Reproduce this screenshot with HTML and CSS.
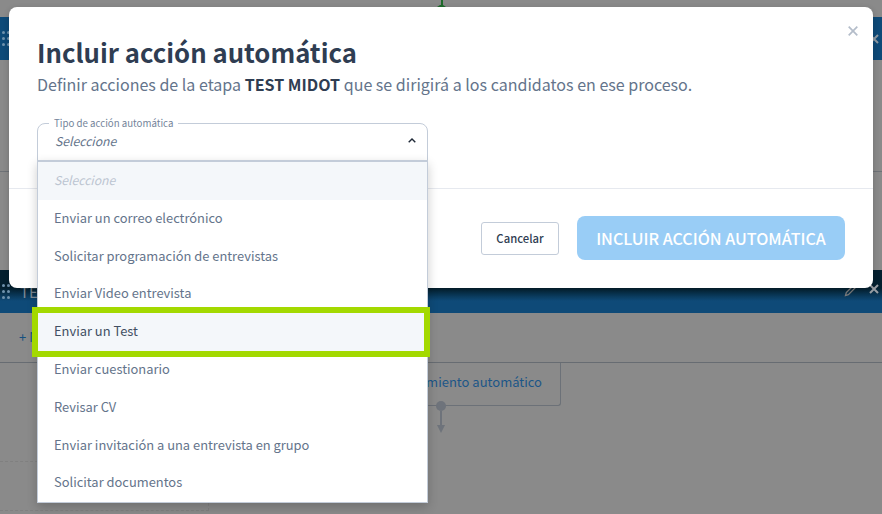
FILE: index.html
```html
<!DOCTYPE html>
<html lang="es">
<head>
<meta charset="utf-8">
<title>Incluir acción automática</title>
<link rel="stylesheet" href="styles.css">
</head>
<body>
<div class="page">
  <div class="stub"></div>
  <div class="bar bar-top">
    <svg class="grip" width="8" height="15" viewBox="0 0 8 15"><g fill="#6f93ad"><circle cx="1.5" cy="1.5" r="1.5"/><circle cx="6.5" cy="1.5" r="1.5"/><circle cx="1.5" cy="7.5" r="1.5"/><circle cx="6.5" cy="7.5" r="1.5"/><circle cx="1.5" cy="13.5" r="1.5"/><circle cx="6.5" cy="13.5" r="1.5"/></g></svg>
    <svg class="bar-x" width="10" height="10" viewBox="0 0 10 10"><path d="M1 1l8 8M9 1l-8 8" stroke="#8f9aa3" stroke-width="2"/></svg>
  </div>
  <div class="rule rule-top"></div>
  <div class="bar bar-second">
    <svg class="grip" width="8" height="15" viewBox="0 0 8 15"><g fill="#6f93ad"><circle cx="1.5" cy="1.5" r="1.5"/><circle cx="6.5" cy="1.5" r="1.5"/><circle cx="1.5" cy="7.5" r="1.5"/><circle cx="6.5" cy="7.5" r="1.5"/><circle cx="1.5" cy="13.5" r="1.5"/><circle cx="6.5" cy="13.5" r="1.5"/></g></svg>
    <span class="bar-title">TEST</span>
    <svg class="pencil" width="14" height="14" viewBox="0 0 14 14"><path d="M1.5 12.5l.8-3L10 2l2 2-7.6 7.7z" fill="none" stroke="#7b7b7b" stroke-width="1.3"/></svg>
    <svg class="bar-x" width="10" height="10" viewBox="0 0 10 10"><path d="M1 1l8 8M9 1l-8 8" stroke="#9a9fa5" stroke-width="2"/></svg>
  </div>
  <div class="tools"><span class="add">+ N</span></div>
  <div class="canvas">
    <div class="flow-box">Incluir movimiento automático</div>
    <div class="connector">
      <span class="dot"></span>
      <span class="stem"></span>
      <span class="arrow"></span>
    </div>
    <div class="dashed"></div>
  </div>
</div>

<div class="modal">
  <button class="close" type="button" aria-label="Cerrar">
    <svg width="10" height="10" viewBox="0 0 10 10"><path d="M.7.7l8.6 8.6M9.3.7L.7 9.3" stroke="#b4bdca" stroke-width="1.7"/></svg>
  </button>
  <div class="modal-body">
    <h1 class="title">Incluir acción automática</h1>
    <p class="subtitle">Definir acciones de la etapa <strong>TEST MIDOT</strong> que se dirigirá a los candidatos en ese proceso.</p>
    <div class="select">
      <span class="select-label">Tipo de acción automática</span>
      <span class="select-value">Seleccione</span>
      <svg class="chevron" width="8" height="5" viewBox="0 0 8 5"><path d="M.7 4.3L4 1l3.3 3.3" fill="none" stroke="#1f2937" stroke-width="1.4"/></svg>
      <ul class="menu">
        <li class="option placeholder">Seleccione</li>
        <li class="option">Enviar un correo electrónico</li>
        <li class="option">Solicitar programación de entrevistas</li>
        <li class="option">Enviar Video entrevista</li>
        <li class="option active">Enviar un Test</li>
        <li class="option">Enviar cuestionario</li>
        <li class="option">Revisar CV</li>
        <li class="option">Enviar invitación a una entrevista en grupo</li>
        <li class="option">Solicitar documentos</li>
      </ul>
    </div>
  </div>
  <div class="modal-footer">
    <button class="btn-cancel" type="button">Cancelar</button>
    <button class="btn-primary" type="button">INCLUIR ACCIÓN AUTOMÁTICA</button>
  </div>
</div>
</body>
</html>
```
FILE: styles.css
```css
* { box-sizing: border-box; }
html, body { margin: 0; height: 100%; }
body {
  width: 882px;
  height: 514px;
  overflow: hidden;
  position: relative;
  background: #8a8a8a;
  font-family: "Noto Sans CJK SC", "Noto Sans", sans-serif;
}
.page { height: 514px; overflow: hidden; }
.stub {
  width: 9px;
  height: 7px;
  margin-left: 437px;
  border-bottom: 2px solid #1d6a2a;
  border-left: 3px solid transparent;
  border-right: 3px solid transparent;
  background: linear-gradient(#1d6a2a, #1d6a2a) center / 2px 100% no-repeat;
}
.bar {
  display: flex;
  align-items: center;
  height: 43px;
  padding: 0 1px 0 2px;
  background: #0e4a78;
}
.bar-top { margin-top: 10px; }
.bar-second {
  margin-top: 98px;
  background: linear-gradient(#04202f 18px, #0e4a78 31px);
}
.grip { flex: none; }
.bar-top .grip { margin-bottom: 1px; }
.bar-title {
  margin-left: 10px;
  font-size: 15px;
  color: #7f8c97;
}
.pencil { margin-left: auto; margin-right: 11px; margin-bottom: 3px; }
.bar-x { flex: none; margin-right: 2px; }
.bar-second .bar-x { margin-bottom: 5px; }
.bar-top .bar-x { margin-left: auto; }
.rule { height: 1px; background: #6e7277; }
.rule-top { margin-top: 111px; }
.tools {
  height: 50px;
  padding: 14px 0 0 19px;
  border-bottom: 1px solid #676c72;
  font-size: 13px;
  color: #16507f;
}
.canvas { position: relative; height: 151px; }
.flow-box {
  width: 181px;
  margin-left: 380px;
  height: 43px;
  padding-right: 18px;
  border-right: 1px solid #6c7178;
  border-bottom: 1px solid #6c7178;
  border-radius: 0 0 3px 0;
  font-size: 13px;
  line-height: 38px;
  text-align: right;
  white-space: nowrap;
  color: #1c5688;
  direction: rtl;
}
.connector {
  display: flex;
  flex-direction: column;
  align-items: center;
  width: 10px;
  margin-left: 436px;
  margin-top: -5px;
}
.dot { width: 10px; height: 10px; border-radius: 50%; background: #6e737b; }
.stem { width: 2px; height: 14px; background: #6e737b; }
.arrow {
  width: 0;
  height: 0;
  border-left: 4px solid transparent;
  border-right: 4px solid transparent;
  border-top: 8px solid #6e737b;
}
.dashed {
  width: 209px;
  height: 50px;
  margin-top: 28px;
  border: 1px dashed #808080;
  border-left: 0;
}

.modal {
  position: absolute;
  left: 9px;
  top: 7px;
  width: 864px;
  height: 281px;
  background: #fff;
  border-radius: 8px;
  box-shadow: 0 2px 6px rgba(0, 0, 0, .2);
}
.close {
  position: absolute;
  right: 15px;
  top: 19px;
  display: flex;
  width: 10px;
  height: 10px;
  padding: 0;
  border: 0;
  background: none;
}
.modal-body {
  height: 182px;
  padding: 27px 28px 0;
  border-bottom: 1px solid #e6e9ef;
}
.title {
  margin: 0;
  font-size: 25.7px;
  line-height: 36px;
  font-weight: 700;
  color: #2f3d52;
}
.subtitle {
  margin: 1px 0 0;
  font-size: 16.05px;
  line-height: 26px;
  color: #64748b;
}
.subtitle strong { font-weight: 700; color: #2f3d52; }
.select {
  position: relative;
  width: 391px;
  height: 38px;
  margin-top: 26px;
  border: 1px solid #c3ccd9;
  border-radius: 8px 8px 0 0;
  background: #fff;
}
.select-label {
  position: absolute;
  left: 11px;
  top: -7px;
  padding: 0 5px;
  background: #fff;
  font-size: 9.7px;
  line-height: 12px;
  color: #74849a;
}
.select-value {
  display: block;
  padding: 7px 0 0 17px;
  font-size: 12.2px;
  line-height: 20px;
  font-style: italic;
  color: #64748b;
}
.chevron { position: absolute; right: 11px; top: 14px; }
.menu {
  position: absolute;
  left: -1px;
  right: -1px;
  top: 36px;
  height: 343px;
  margin: 0;
  padding: 0;
  list-style: none;
  background: #fff;
  border: 1px solid #c3ccd9;
  border-top-width: 2px;
  box-shadow: 0 4px 10px rgba(0, 0, 0, .2);
  z-index: 2;
}
.option {
  height: 37.8px;
  padding-left: 16px;
  font-size: 12.9px;
  line-height: 36.8px;
  color: #64748b;
}
.placeholder {
  background: #f4f7fa;
  font-size: 12.2px;
  font-style: italic;
  color: #bcc5d1;
}
.active {
  position: relative;
  background: #f4f7fa;
  color: #414f63;
}
.active::after {
  content: "";
  position: absolute;
  inset: -6px -3px -6px -6px;
  border: 6px solid #a3d900;
}
.modal-footer {
  display: flex;
  justify-content: flex-end;
  align-items: center;
  gap: 18px;
  padding: 27px 28px 0 0;
}
.btn-cancel {
  width: 78px;
  height: 33px;
  padding: 0;
  border: 1px solid #c3ccd9;
  border-radius: 3px;
  background: #fff;
  font: 500 11.3px "Noto Sans CJK SC", sans-serif;
  color: #2f3d52;
}
.btn-primary {
  width: 268px;
  height: 44px;
  padding: 0;
  border: 0;
  border-radius: 8px;
  background: #99cdf6;
  font: 500 16.1px "Noto Sans CJK SC", sans-serif;
  color: #fff;
}
```
